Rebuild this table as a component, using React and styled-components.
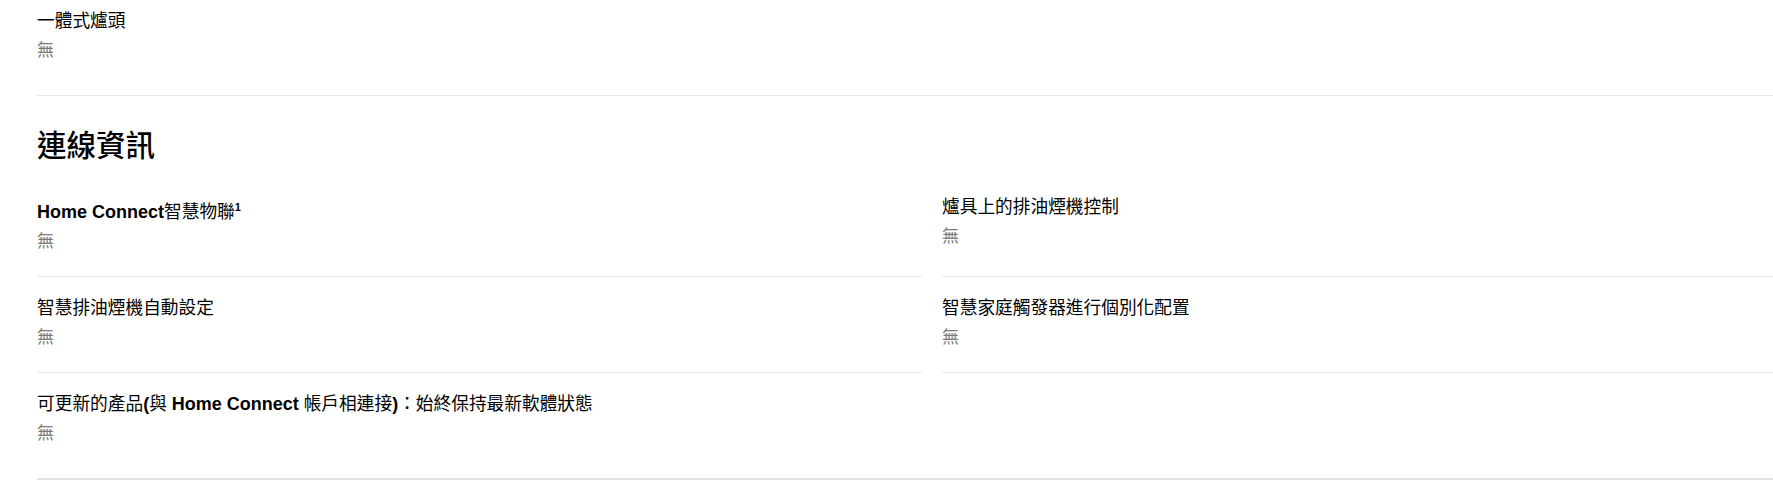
import React from "react";
import styled, { createGlobalStyle } from "styled-components";

const GlobalStyle = createGlobalStyle`
  html, body {
    margin: 0;
    padding: 0;
    background: #ffffff;
    overflow: hidden;
  }
  body {
    font-family: "Liberation Sans", "Noto Sans CJK TC", sans-serif;
    color: #000000;
  }
`;

const Page = styled.div`
  width: 1790px;
  padding-left: 37px;
`;

const Item = styled.div`
  padding: ${(p) => p.$pt ?? 18}px 0 ${(p) => p.$pb ?? 21}px;
  border-bottom: ${(p) => (p.$strong ? "2px solid #e3e3e3" : "1px solid #e7e7e7")};
  grid-column: ${(p) => (p.$wide ? "1 / -1" : "auto")};
`;

const Heading = styled.h2`
  margin: 32px 0 12px;
  font-size: 29.5px;
  line-height: 36px;
  font-weight: 500;
  color: #000000;
`;

const Grid = styled.div`
  display: grid;
  grid-template-columns: 885px 885px;
  column-gap: 20px;
`;

const Title = styled.div`
  font-size: 17.7px;
  line-height: 26px;
  margin-bottom: 4px;
  color: #000000;
`;

const Strong = styled.span`
  font-weight: 700;
  font-size: 18px;
`;

const Sup = styled.sup`
  font-size: 11px;
  font-weight: 700;
  line-height: 26px;
  vertical-align: super;
`;

const Value = styled.div`
  font-size: 17px;
  line-height: 26px;
  color: #7a7a7a;
`;

export default function App() {
  return (
    <>
      <GlobalStyle />
      <Page>
        <Item $pt={8} $pb={31}>
          <Title>一體式爐頭</Title>
          <Value>無</Value>
        </Item>
        <Heading>連線資訊</Heading>
        <Grid>
          <Item>
            <Title>
              <Strong>Home Connect</Strong>智慧物聯<Sup>1</Sup>
            </Title>
            <Value>無</Value>
          </Item>
          <Item>
            <Title>爐具上的排油煙機控制</Title>
            <Value>無</Value>
          </Item>
          <Item>
            <Title>智慧排油煙機自動設定</Title>
            <Value>無</Value>
          </Item>
          <Item>
            <Title>智慧家庭觸發器進行個別化配置</Title>
            <Value>無</Value>
          </Item>
          <Item $wide $strong $pb={31}>
            <Title>
              可更新的產品<Strong>(</Strong>與 <Strong>Home Connect</Strong> 帳戶相連接<Strong>)</Strong>：始終保持最新軟體狀態
            </Title>
            <Value>無</Value>
          </Item>
        </Grid>
      </Page>
    </>
  );
}
